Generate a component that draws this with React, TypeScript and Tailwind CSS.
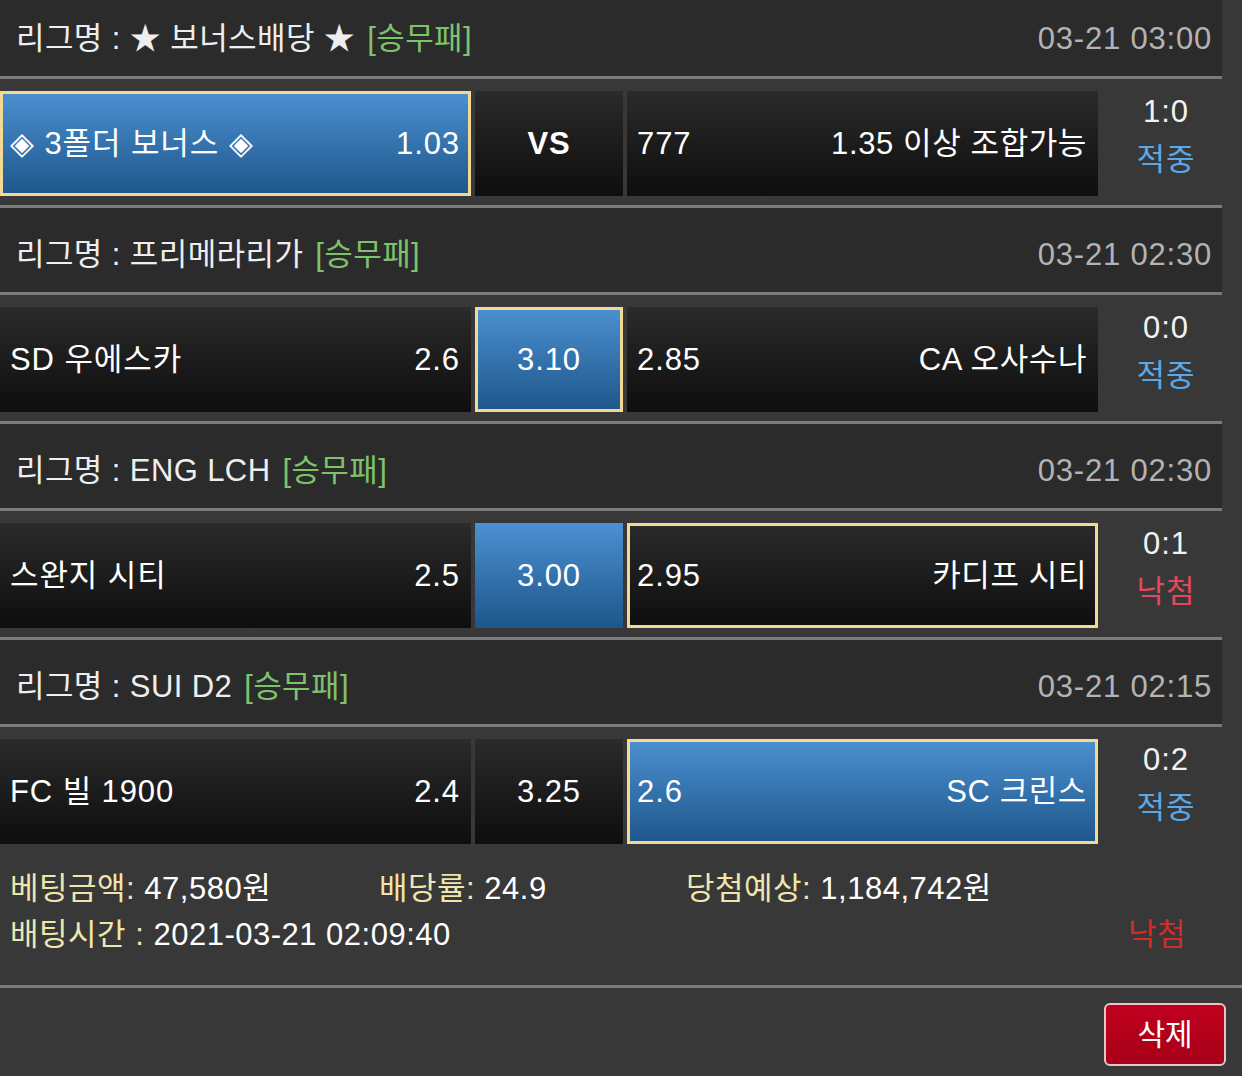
import React from 'react';

type Side = 'home' | 'draw' | 'away';

interface Match {
  league: string;
  time: string;
  home: string;
  homeOdd: string;
  draw: string;
  awayOdd: string;
  away: string;
  score: string;
  result: '적중' | '낙첨';
  pick: Side;
  lit: Side;
}

const matches: Match[] = [
  { league: '★ 보너스배당 ★', time: '03-21 03:00', home: '◈ 3폴더 보너스 ◈', homeOdd: '1.03', draw: 'VS', awayOdd: '777', away: '1.35 이상 조합가능', score: '1:0', result: '적중', pick: 'home', lit: 'home' },
  { league: '프리메라리가', time: '03-21 02:30', home: 'SD 우에스카', homeOdd: '2.6', draw: '3.10', awayOdd: '2.85', away: 'CA 오사수나', score: '0:0', result: '적중', pick: 'draw', lit: 'draw' },
  { league: 'ENG LCH', time: '03-21 02:30', home: '스완지 시티', homeOdd: '2.5', draw: '3.00', awayOdd: '2.95', away: '카디프 시티', score: '0:1', result: '낙첨', pick: 'away', lit: 'draw' },
  { league: 'SUI D2', time: '03-21 02:15', home: 'FC 빌 1900', homeOdd: '2.4', draw: '3.25', awayOdd: '2.6', away: 'SC 크린스', score: '0:2', result: '적중', pick: 'away', lit: 'away' },
];

const cellClass = (picked: boolean, lit: boolean) =>
  [
    'h-[105px] flex items-center border-[3px] bg-origin-border',
    lit ? 'bg-linear-to-b from-[#4c91d2] to-[#1d568a]' : 'bg-linear-to-b from-[#2b2b2b] to-[#0e0e0e]',
    picked ? 'border-[#f3da94]' : 'border-transparent',
  ].join(' ');

const Separator = () => <div className="h-[3px] w-[1222px] bg-[#7b7b7b]" />;

const MatchBlock: React.FC<{ m: Match }> = ({ m }) => (
  <div>
    <div className="h-[84px] w-[1222px] bg-[#2b2b2b] flex items-center justify-between pl-[16px] pr-[10px] pt-[8px]">
      <div className="text-[#eeeeee] tracking-[0.4px]">
        리그명 : {m.league}
        <span className="ml-[12px] text-[#7dc36b]">[승무패]</span>
      </div>
      <div className="text-[#b3b3b3] tracking-[0.8px]">{m.time}</div>
    </div>
    <Separator />
    <div className="h-[126px] w-[1222px] flex pt-[12px] tracking-[0.9px]">
      <div className={cellClass(m.pick === 'home', m.lit === 'home') + ' w-[471px] justify-between pl-[7px] pr-[8px]'}>
        <span>{m.home}</span>
        <span>{m.homeOdd}</span>
      </div>
      <div className={cellClass(m.pick === 'draw', m.lit === 'draw') + ' w-[148px] ml-[4px] justify-center'}>
        <span className={m.draw === 'VS' ? 'font-bold' : ''}>{m.draw}</span>
      </div>
      <div className={cellClass(m.pick === 'away', m.lit === 'away') + ' w-[471px] ml-[4px] justify-between pl-[7px] pr-[8px]'}>
        <span>{m.awayOdd}</span>
        <span className="tracking-[0.6px]">{m.away}</span>
      </div>
      <div className="flex-1 ml-[12px] flex flex-col items-center -mt-[3px] leading-[48px]">
        <span className="text-[#f2f2f2]">{m.score}</span>
        <span className={m.result === '적중' ? 'text-[#5aa8e6]' : 'text-[#e3485c]'}>{m.result}</span>
      </div>
    </div>
  </div>
);

export default function App() {
  return (
    <div
      className="w-[1242px] h-[1076px] overflow-hidden bg-[#383838] text-white text-[31px] leading-none"
      style={{ fontFamily: '"Liberation Sans", "Noto Sans CJK KR", sans-serif' }}
    >
      <div className="-mt-[8px]">
        {matches.map((m, i) => (
          <div key={i}>
            {i > 0 && <Separator />}
            <MatchBlock m={m} />
          </div>
        ))}
      </div>

      <div className="h-[132px] pt-[13px] pl-[10px] pr-[56px] leading-[46px] tracking-[0.5px]">
        <div className="flex">
          <div className="w-[369px]">
            <span className="text-[#efe6ae]">베팅금액:</span> 47,580원
          </div>
          <div className="w-[307px]">
            <span className="text-[#efe6ae]">배당률:</span> 24.9
          </div>
          <div>
            <span className="text-[#efe6ae]">당첨예상:</span> 1,184,742원
          </div>
        </div>
        <div className="flex justify-between">
          <div>
            <span className="text-[#efe6ae]">배팅시간 :</span> 2021-03-21 02:09:40
          </div>
          <div className="text-[#d42a2a]">낙첨</div>
        </div>
      </div>
      <div className="h-[3px] w-full bg-[#7b7b7b]" />

      <div className="flex justify-end pt-[15px] pr-[16px]">
        <button className="w-[122px] h-[63px] rounded-[6px] border-2 border-[#e6c6c6] bg-linear-to-b from-[#c0001f] to-[#a80018] text-white text-[30px] flex items-center justify-center">
          삭제
        </button>
      </div>
    </div>
  );
}
